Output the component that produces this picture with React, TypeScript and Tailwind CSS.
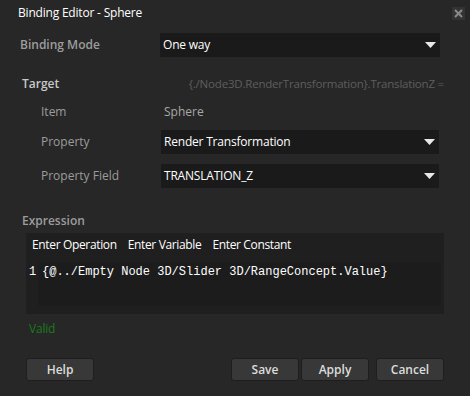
import React from 'react';

const font = { fontFamily: '"Open Sans", "Noto Sans", sans-serif' };

const Caret = () => (
  <svg width="11" height="6" viewBox="0 0 11 6" className="shrink-0">
    <path d="M0 0 H11 L5.5 6 Z" fill="#e8e8e8" />
  </svg>
);

const Dropdown: React.FC<{ value: string; className?: string }> = ({ value, className = '' }) => (
  <div className={`h-[24px] bg-[#1a1a1a] flex items-center justify-between pl-[3px] pr-[4px] ${className}`}>
    <span className="text-[12px] text-white tracking-[-0.2px]">{value}</span>
    <Caret />
  </div>
);

const Button: React.FC<{ label: string }> = ({ label }) => (
  <button className="w-[68px] h-[23px] bg-[#383838] border border-[#1e1e1e] rounded-[3px] text-[12px] font-semibold text-[#dcdcdc] flex items-center justify-center">
    {label}
  </button>
);

export default function App() {
  return (
    <div className="w-[470px] h-[396px] bg-[#272727] relative overflow-hidden" style={font}>
      {/* Title bar */}
      <div className="h-[26px] flex items-center justify-between pl-[18px] pr-[5px]">
        <span className="text-[12px] text-white tracking-[-0.2px]">Binding Editor - Sphere</span>
        <div className="w-[13px] h-[13px] bg-[#333333] flex items-center justify-center">
          <svg width="9" height="9" viewBox="0 0 9 9">
            <path d="M1 1 L8 8 M8 1 L1 8" stroke="#8a8a8a" strokeWidth="2" />
          </svg>
        </div>
      </div>

      {/* Binding mode */}
      <div className="flex items-center mt-[7px] pl-[20px]">
        <span className="w-[140px] text-[12px] font-semibold text-[#9c9c9c]">Binding Mode</span>
        <Dropdown value="One way" className="w-[280px]" />
      </div>

      {/* Target */}
      <div className="flex items-center justify-between mt-[18px] pl-[22px] pr-[26px] h-[18px]">
        <span className="text-[12px] font-semibold text-[#c8c8c8]">Target</span>
        <span className="text-[11.5px] text-[#5e5e5e] tracking-[-0.2px]">{'{./Node3D.RenderTransformation}.TranslationZ ='}</span>
      </div>

      <div className="pl-[41px] flex items-center h-[18px] mt-[10px]">
        <span className="w-[123px] text-[12px] text-[#9c9c9c]">Item</span>
        <span className="text-[12px] text-[#a8a8a8]">Sphere</span>
      </div>

      <div className="pl-[41px] flex items-center mt-[9px]">
        <span className="w-[120px] text-[12px] text-[#9c9c9c]">Property</span>
        <Dropdown value="Render Transformation" className="w-[278px]" />
      </div>

      <div className="pl-[41px] flex items-center mt-[10px]">
        <span className="w-[120px] text-[12px] text-[#9c9c9c]">Property Field</span>
        <Dropdown value="TRANSLATION_Z" className="w-[278px]" />
      </div>

      {/* Expression */}
      <div className="pl-[22px] mt-[24px] h-[18px] flex items-center">
        <span className="text-[12px] font-semibold text-[#9c9c9c]">Expression</span>
      </div>

      <div className="ml-[26px] mt-[3px] w-[418px] h-[81px] bg-[#1f1f1f] pt-[3px]">
        <div className="flex gap-[11px] pl-[6px] h-[18px] items-center text-[12px] text-white tracking-[-0.35px]">
          <span>Enter Operation</span>
          <span>Enter Variable</span>
          <span>Enter Constant</span>
        </div>
        <div className="flex mt-[8px]">
          <span
            className="w-[12px] pl-[3px] text-[12px] text-white pt-[1px]"
            style={{ fontFamily: '"Liberation Mono", monospace' }}
          >
            1
          </span>
          <div
            className="w-[403px] h-[44px] bg-[#1c1c1c] pl-[4px] pt-[1px] text-[12px] text-white"
            style={{ fontFamily: '"Liberation Mono", monospace' }}
          >
            {'{@../Empty Node 3D/Slider 3D/RangeConcept.Value}'}
          </div>
        </div>
      </div>

      <div className="pl-[29px] mt-[7px] h-[16px] flex items-center">
        <span className="text-[12px] text-[#1a7a1a] tracking-[-0.2px]">Valid</span>
      </div>

      {/* Buttons */}
      <div className="flex items-center mt-[21px] pl-[26px] pr-[26px]">
        <Button label="Help" />
        <div className="flex-1" />
        <div className="flex gap-[2px]">
          <Button label="Save" />
          <Button label="Apply" />
        </div>
        <div className="ml-[7px]">
          <Button label="Cancel" />
        </div>
      </div>
    </div>
  );
}
